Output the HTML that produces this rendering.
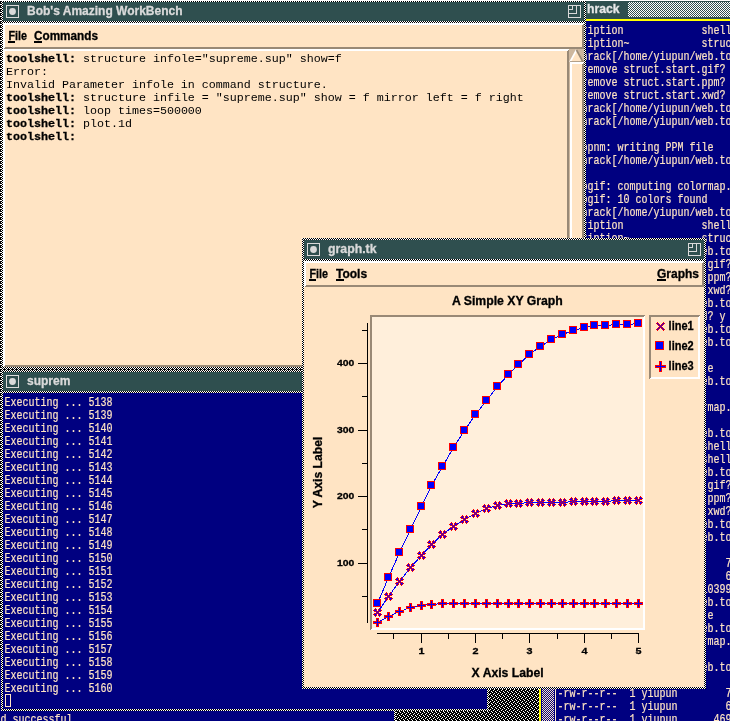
<!DOCTYPE html>
<html><head><meta charset="utf-8"><title>Bob's Amazing WorkBench</title>
<style>
html,body{margin:0;padding:0;background:#000;overflow:hidden}
svg{display:block;will-change:transform}
.tm{font-family:"Liberation Mono","DejaVu Sans Mono",monospace;font-size:13px;white-space:pre;stroke:#FFE4C4;stroke-width:.2px}
.hb{font-family:"Liberation Sans","DejaVu Sans",sans-serif;font-weight:bold;white-space:pre;stroke-width:.3px}
.cr{font-family:"Liberation Mono","DejaVu Sans Mono",monospace;font-size:11.667px;white-space:pre}
.cb{font-weight:bold;stroke:#000;stroke-width:.3px}
</style></head><body>
<svg width="730" height="721" viewBox="0 0 730 721" shape-rendering="crispEdges">
<defs>
<pattern id="weave" width="4" height="4" patternUnits="userSpaceOnUse"><rect width="4" height="4" fill="#000"/><rect x="0" y="0" width="1" height="1" fill="#fff"/><rect x="2" y="1" width="1" height="1" fill="#fff"/><rect x="1" y="2" width="1" height="1" fill="#fff"/><rect x="3" y="3" width="1" height="1" fill="#fff"/></pattern>
<pattern id="dith" width="2" height="2" patternUnits="userSpaceOnUse"><rect width="2" height="2" fill="#000"/><rect x="0" y="0" width="1" height="1" fill="#fff"/><rect x="1" y="1" width="1" height="1" fill="#fff"/></pattern>
<pattern id="dith2" width="2" height="2" patternUnits="userSpaceOnUse"><rect width="2" height="2" fill="#fff"/><rect x="0" y="0" width="1" height="1" fill="#000"/><rect x="1" y="1" width="1" height="1" fill="#000"/></pattern>
<pattern id="tstip" width="2" height="2" patternUnits="userSpaceOnUse"><rect width="2" height="2" fill="#2F4F4F"/><rect x="1" y="0" width="1" height="1" fill="#fff"/><rect x="0" y="1" width="1" height="1" fill="#fff"/></pattern>
<pattern id="sbstip" width="2" height="2" patternUnits="userSpaceOnUse"><rect width="2" height="2" fill="#000080"/><rect x="0" y="0" width="1" height="1" fill="#FFE4C4"/><rect x="1" y="1" width="1" height="1" fill="#FFE4C4"/></pattern>
<clipPath id="cpHr"><rect x="539" y="0" width="191" height="721"/></clipPath>
<clipPath id="cpBot"><rect x="0" y="711" width="394" height="10"/></clipPath>
</defs>
<rect x="0" y="0" width="730" height="721" fill="url(#weave)"/>
<rect x="0" y="711" width="394" height="10" fill="#000080"/>
<rect x="0" y="651" width="1" height="60" fill="#000080"/>
<rect x="394" y="711" width="2" height="10" fill="url(#dith2)"/>
<g clip-path="url(#cpBot)">
<text class="tm" x="0.5" y="723" textLength="78" lengthAdjust="spacingAndGlyphs" fill="#FFE4C4">d successful.</text>
</g>
<g clip-path="url(#cpHr)">
<rect x="539" y="0" width="191" height="721" fill="#000080"/>
<rect x="539" y="0" width="2" height="721" fill="#FFFF00"/>
<rect x="539" y="0" width="191" height="1" fill="#fff"/>
<rect x="541" y="1" width="189" height="18" fill="#2F4F4F"/>
<rect x="628" y="2" width="102" height="15" fill="url(#tstip)"/>
<text class="hb" x="587" y="13" font-size="12" fill="#E8E8E8" stroke="#E8E8E8" text-anchor="start" textLength="32.5" lengthAdjust="spacingAndGlyphs">hrack</text>
<rect x="539" y="19" width="191" height="2" fill="#FFFF00"/>
<rect x="542" y="21" width="12" height="700" fill="url(#sbstip)"/>
<rect x="555" y="21" width="1" height="700" fill="#FFE4C4"/>
<text class="tm" x="557.4" y="34" textLength="174" lengthAdjust="spacingAndGlyphs" fill="#FFE4C4">Description             shell</text>
<text class="tm" x="557.4" y="47" textLength="180" lengthAdjust="spacingAndGlyphs" fill="#FFE4C4">Description~            struct</text>
<text class="tm" x="557.4" y="60" textLength="192" lengthAdjust="spacingAndGlyphs" fill="#FFE4C4">yi@shrack[/home/yiupun/web.tool]</text>
<text class="tm" x="557.4" y="73" textLength="180" lengthAdjust="spacingAndGlyphs" fill="#FFE4C4">rm: remove struct.start.gif? y</text>
<text class="tm" x="557.4" y="86" textLength="180" lengthAdjust="spacingAndGlyphs" fill="#FFE4C4">rm: remove struct.start.ppm? y</text>
<text class="tm" x="557.4" y="99" textLength="180" lengthAdjust="spacingAndGlyphs" fill="#FFE4C4">rm: remove struct.start.xwd? y</text>
<text class="tm" x="557.4" y="112" textLength="192" lengthAdjust="spacingAndGlyphs" fill="#FFE4C4">yi@shrack[/home/yiupun/web.tool]</text>
<text class="tm" x="557.4" y="125" textLength="192" lengthAdjust="spacingAndGlyphs" fill="#FFE4C4">yi@shrack[/home/yiupun/web.tool]</text>
<text class="tm" x="557.4" y="151" textLength="156" lengthAdjust="spacingAndGlyphs" fill="#FFE4C4">giftopnm: writing PPM file</text>
<text class="tm" x="557.4" y="164" textLength="192" lengthAdjust="spacingAndGlyphs" fill="#FFE4C4">yi@shrack[/home/yiupun/web.tool]</text>
<text class="tm" x="557.4" y="190" textLength="174" lengthAdjust="spacingAndGlyphs" fill="#FFE4C4">ppmtogif: computing colormap.</text>
<text class="tm" x="557.4" y="203" textLength="150" lengthAdjust="spacingAndGlyphs" fill="#FFE4C4">ppmtogif: 10 colors found</text>
<text class="tm" x="557.4" y="216" textLength="192" lengthAdjust="spacingAndGlyphs" fill="#FFE4C4">yi@shrack[/home/yiupun/web.tool]</text>
<text class="tm" x="557.4" y="229" textLength="174" lengthAdjust="spacingAndGlyphs" fill="#FFE4C4">Description             shell</text>
<text class="tm" x="557.4" y="242" textLength="180" lengthAdjust="spacingAndGlyphs" fill="#FFE4C4">Description~            struct</text>
<text class="tm" x="557.4" y="255" textLength="192" lengthAdjust="spacingAndGlyphs" fill="#FFE4C4">yi@shrack[/home/yiupun/web.tool]</text>
<text class="tm" x="557.4" y="268" textLength="186" lengthAdjust="spacingAndGlyphs" fill="#FFE4C4">rm: remove struct1.start.gif? y</text>
<text class="tm" x="557.4" y="281" textLength="186" lengthAdjust="spacingAndGlyphs" fill="#FFE4C4">rm: remove struct1.start.ppm? y</text>
<text class="tm" x="557.4" y="294" textLength="186" lengthAdjust="spacingAndGlyphs" fill="#FFE4C4">rm: remove struct1.start.xwd? y</text>
<text class="tm" x="557.4" y="307" textLength="192" lengthAdjust="spacingAndGlyphs" fill="#FFE4C4">yi@shrack[/home/yiupun/web.tool]</text>
<text class="tm" x="557.4" y="320" textLength="168" lengthAdjust="spacingAndGlyphs" fill="#FFE4C4">rm: remove struct.end.xwd? y</text>
<text class="tm" x="557.4" y="333" textLength="192" lengthAdjust="spacingAndGlyphs" fill="#FFE4C4">yi@shrack[/home/yiupun/web.tool]</text>
<text class="tm" x="557.4" y="346" textLength="192" lengthAdjust="spacingAndGlyphs" fill="#FFE4C4">yi@shrack[/home/yiupun/web.tool]</text>
<text class="tm" x="557.4" y="372" textLength="156" lengthAdjust="spacingAndGlyphs" fill="#FFE4C4">Description~             e</text>
<text class="tm" x="557.4" y="385" textLength="192" lengthAdjust="spacingAndGlyphs" fill="#FFE4C4">yi@shrack[/home/yiupun/web.tool]</text>
<text class="tm" x="557.4" y="411" textLength="174" lengthAdjust="spacingAndGlyphs" fill="#FFE4C4">ppmtogif: computing colormap.</text>
<text class="tm" x="557.4" y="437" textLength="192" lengthAdjust="spacingAndGlyphs" fill="#FFE4C4">yi@shrack[/home/yiupun/web.tool]</text>
<text class="tm" x="557.4" y="450" textLength="174" lengthAdjust="spacingAndGlyphs" fill="#FFE4C4">Description             shell</text>
<text class="tm" x="557.4" y="463" textLength="174" lengthAdjust="spacingAndGlyphs" fill="#FFE4C4">Description             shell</text>
<text class="tm" x="557.4" y="476" textLength="192" lengthAdjust="spacingAndGlyphs" fill="#FFE4C4">yi@shrack[/home/yiupun/web.tool]</text>
<text class="tm" x="557.4" y="489" textLength="186" lengthAdjust="spacingAndGlyphs" fill="#FFE4C4">rm: remove struct1.start.gif? y</text>
<text class="tm" x="557.4" y="502" textLength="186" lengthAdjust="spacingAndGlyphs" fill="#FFE4C4">rm: remove struct1.start.ppm? y</text>
<text class="tm" x="557.4" y="515" textLength="186" lengthAdjust="spacingAndGlyphs" fill="#FFE4C4">rm: remove struct1.start.xwd? y</text>
<text class="tm" x="557.4" y="528" textLength="192" lengthAdjust="spacingAndGlyphs" fill="#FFE4C4">yi@shrack[/home/yiupun/web.tool]</text>
<text class="tm" x="557.4" y="541" textLength="192" lengthAdjust="spacingAndGlyphs" fill="#FFE4C4">yi@shrack[/home/yiupun/web.tool]</text>
<text class="tm" x="557.4" y="567" textLength="174" lengthAdjust="spacingAndGlyphs" fill="#FFE4C4">-rw-r--r--  1 yiupun        7</text>
<text class="tm" x="557.4" y="580" textLength="174" lengthAdjust="spacingAndGlyphs" fill="#FFE4C4">-rw-r--r--  1 yiupun        6</text>
<text class="tm" x="557.4" y="593" textLength="174" lengthAdjust="spacingAndGlyphs" fill="#FFE4C4">-rw-r--r--  1 yiupun    10399</text>
<text class="tm" x="557.4" y="606" textLength="192" lengthAdjust="spacingAndGlyphs" fill="#FFE4C4">yi@shrack[/home/yiupun/web.tool]</text>
<text class="tm" x="557.4" y="619" textLength="156" lengthAdjust="spacingAndGlyphs" fill="#FFE4C4">Description~             e</text>
<text class="tm" x="557.4" y="632" textLength="192" lengthAdjust="spacingAndGlyphs" fill="#FFE4C4">yi@shrack[/home/yiupun/web.tool]</text>
<text class="tm" x="557.4" y="645" textLength="174" lengthAdjust="spacingAndGlyphs" fill="#FFE4C4">ppmtogif: computing colormap.</text>
<text class="tm" x="701.4" y="658" textLength="6" lengthAdjust="spacingAndGlyphs" fill="#FFE4C4">]</text>
<text class="tm" x="557.4" y="671" textLength="192" lengthAdjust="spacingAndGlyphs" fill="#FFE4C4">yi@shrack[/home/yiupun/web.tool]</text>
<text class="tm" x="557.4" y="697" textLength="174" lengthAdjust="spacingAndGlyphs" fill="#FFE4C4">-rw-r--r--  1 yiupun        7</text>
<text class="tm" x="557.4" y="710" textLength="174" lengthAdjust="spacingAndGlyphs" fill="#FFE4C4">-rw-r--r--  1 yiupun        6</text>
<text class="tm" x="557.4" y="723" textLength="174" lengthAdjust="spacingAndGlyphs" fill="#FFE4C4">-rw-r--r--  1 yiupun      469</text>
</g>
<rect x="1" y="370" width="488" height="341" fill="url(#dith2)"/>
<rect x="3" y="372" width="484" height="19" fill="#2F4F4F"/>
<rect x="6.5" y="375.5" width="12" height="12" fill="none" stroke="#D9D9D9"/>
<circle cx="12.5" cy="381.5" r="3.4" fill="#D9D9D9" shape-rendering="auto"/>
<text class="hb" x="27" y="385" font-size="12" fill="#D9D9D9" stroke="#D9D9D9" text-anchor="start">suprem</text>
<rect x="3" y="393" width="484" height="316" fill="#000080"/>
<text class="tm" x="4.4" y="406" textLength="108" lengthAdjust="spacingAndGlyphs" fill="#FFE4C4">Executing ... 5138</text>
<text class="tm" x="4.4" y="419" textLength="108" lengthAdjust="spacingAndGlyphs" fill="#FFE4C4">Executing ... 5139</text>
<text class="tm" x="4.4" y="432" textLength="108" lengthAdjust="spacingAndGlyphs" fill="#FFE4C4">Executing ... 5140</text>
<text class="tm" x="4.4" y="445" textLength="108" lengthAdjust="spacingAndGlyphs" fill="#FFE4C4">Executing ... 5141</text>
<text class="tm" x="4.4" y="458" textLength="108" lengthAdjust="spacingAndGlyphs" fill="#FFE4C4">Executing ... 5142</text>
<text class="tm" x="4.4" y="471" textLength="108" lengthAdjust="spacingAndGlyphs" fill="#FFE4C4">Executing ... 5143</text>
<text class="tm" x="4.4" y="484" textLength="108" lengthAdjust="spacingAndGlyphs" fill="#FFE4C4">Executing ... 5144</text>
<text class="tm" x="4.4" y="497" textLength="108" lengthAdjust="spacingAndGlyphs" fill="#FFE4C4">Executing ... 5145</text>
<text class="tm" x="4.4" y="510" textLength="108" lengthAdjust="spacingAndGlyphs" fill="#FFE4C4">Executing ... 5146</text>
<text class="tm" x="4.4" y="523" textLength="108" lengthAdjust="spacingAndGlyphs" fill="#FFE4C4">Executing ... 5147</text>
<text class="tm" x="4.4" y="536" textLength="108" lengthAdjust="spacingAndGlyphs" fill="#FFE4C4">Executing ... 5148</text>
<text class="tm" x="4.4" y="549" textLength="108" lengthAdjust="spacingAndGlyphs" fill="#FFE4C4">Executing ... 5149</text>
<text class="tm" x="4.4" y="562" textLength="108" lengthAdjust="spacingAndGlyphs" fill="#FFE4C4">Executing ... 5150</text>
<text class="tm" x="4.4" y="575" textLength="108" lengthAdjust="spacingAndGlyphs" fill="#FFE4C4">Executing ... 5151</text>
<text class="tm" x="4.4" y="588" textLength="108" lengthAdjust="spacingAndGlyphs" fill="#FFE4C4">Executing ... 5152</text>
<text class="tm" x="4.4" y="601" textLength="108" lengthAdjust="spacingAndGlyphs" fill="#FFE4C4">Executing ... 5153</text>
<text class="tm" x="4.4" y="614" textLength="108" lengthAdjust="spacingAndGlyphs" fill="#FFE4C4">Executing ... 5154</text>
<text class="tm" x="4.4" y="627" textLength="108" lengthAdjust="spacingAndGlyphs" fill="#FFE4C4">Executing ... 5155</text>
<text class="tm" x="4.4" y="640" textLength="108" lengthAdjust="spacingAndGlyphs" fill="#FFE4C4">Executing ... 5156</text>
<text class="tm" x="4.4" y="653" textLength="108" lengthAdjust="spacingAndGlyphs" fill="#FFE4C4">Executing ... 5157</text>
<text class="tm" x="4.4" y="666" textLength="108" lengthAdjust="spacingAndGlyphs" fill="#FFE4C4">Executing ... 5158</text>
<text class="tm" x="4.4" y="679" textLength="108" lengthAdjust="spacingAndGlyphs" fill="#FFE4C4">Executing ... 5159</text>
<text class="tm" x="4.4" y="692" textLength="108" lengthAdjust="spacingAndGlyphs" fill="#FFE4C4">Executing ... 5160</text>
<rect x="5.5" y="694.5" width="5" height="12" fill="none" stroke="#FFE4C4"/>
<rect x="1" y="0" width="585" height="369" fill="url(#dith2)"/>
<rect x="3" y="2" width="581" height="19" fill="#2F4F4F"/>
<rect x="6.5" y="5.5" width="12" height="12" fill="none" stroke="#D9D9D9"/>
<circle cx="12.5" cy="11.5" r="3.4" fill="#D9D9D9" shape-rendering="auto"/>
<text class="hb" x="27" y="15" font-size="12" fill="#D9D9D9" stroke="#D9D9D9" text-anchor="start">Bob's Amazing WorkBench</text>
<rect x="568.5" y="5.5" width="12" height="12" fill="none" stroke="#D9D9D9"/>
<path d="M568.5 9.5H572.5V5.5M568.5 13.5H576.5V5.5" fill="none" stroke="#D9D9D9"/>
<rect x="3" y="23" width="581" height="26" fill="#FFE4C4"/>
<path d="M3 23H584L582 25H5V47L3 49Z" fill="#FFFFFF"/>
<path d="M584 49H3L5 47H582V25L584 23Z" fill="#998976"/>
<text class="hb" x="8.5" y="40" font-size="12" fill="#000" stroke="#000" text-anchor="start" textLength="18.5" lengthAdjust="spacingAndGlyphs">File</text>
<rect x="8" y="41" width="7" height="2" fill="#000"/>
<text class="hb" x="34" y="40" font-size="12" fill="#000" stroke="#000" text-anchor="start" textLength="64" lengthAdjust="spacingAndGlyphs">Commands</text>
<rect x="34" y="41" width="8" height="2" fill="#000"/>
<rect x="3" y="49" width="566" height="318" fill="#FFE4C4"/>
<path d="M3 49H569L567 51H5V365L3 367Z" fill="#FFFFFF"/>
<path d="M569 367H3L5 365H567V51L569 49Z" fill="#998976"/>
<rect x="569" y="49" width="15" height="318" fill="#CDB79E"/>
<path d="M576.5 50L570 62H583Z" fill="#FFE4C4" shape-rendering="auto"/>
<path d="M576.5 50L570 62" stroke="#FFFFFF" stroke-width="1.6" fill="none" shape-rendering="auto"/>
<path d="M576.5 50L583 62H570" stroke="#998976" stroke-width="1.6" fill="none" shape-rendering="auto"/>
<rect x="570" y="62" width="14" height="304" fill="#FFE4C4"/>
<path d="M570 62H584L582 64H572V364L570 366Z" fill="#FFFFFF"/>
<path d="M584 366H570L572 364H582V64L584 62Z" fill="#998976"/>
<text class="cr" x="6" y="62" fill="#000"><tspan class="cb">toolshell:</tspan> structure infole="supreme.sup" show=f</text>
<text class="cr" x="6" y="75" fill="#000"><tspan class="cb"></tspan>Error:</text>
<text class="cr" x="6" y="88" fill="#000"><tspan class="cb"></tspan>Invalid Parameter infole in command structure.</text>
<text class="cr" x="6" y="101" fill="#000"><tspan class="cb">toolshell:</tspan> structure infile = "supreme.sup" show = f mirror left = f right</text>
<text class="cr" x="6" y="114" fill="#000"><tspan class="cb">toolshell:</tspan> loop times=500000</text>
<text class="cr" x="6" y="127" fill="#000"><tspan class="cb">toolshell:</tspan> plot.1d</text>
<text class="cr" x="6" y="140" fill="#000"><tspan class="cb">toolshell:</tspan></text>
<rect x="302" y="238" width="404" height="451" fill="url(#dith)"/>
<rect x="304" y="240" width="400" height="19" fill="#2F4F4F"/>
<rect x="307.5" y="243.5" width="12" height="12" fill="none" stroke="#D9D9D9" stroke-width="1"/>
<circle cx="313.5" cy="249.5" r="3.4" fill="#D9D9D9" shape-rendering="auto"/>
<text class="hb" x="328" y="253" font-size="12" fill="#D9D9D9" stroke="#D9D9D9" text-anchor="start" textLength="48.5" lengthAdjust="spacingAndGlyphs">graph.tk</text>
<rect x="688.5" y="243.5" width="12" height="12" fill="none" stroke="#D9D9D9" stroke-width="1"/>
<path d="M688.5 247.5H692.5V243.5M688.5 251.5H696.5V243.5" fill="none" stroke="#D9D9D9" stroke-width="1"/>
<rect x="304" y="261" width="400" height="426" fill="#FFE4C4"/>
<rect x="304" y="261" width="400" height="26" fill="#FFE4C4"/>
<path d="M304 261H704L702 263H306V285L304 287Z" fill="#FFFFFF"/>
<path d="M704 287H304L306 285H702V263L704 261Z" fill="#998976"/>
<text class="hb" x="309.5" y="278" font-size="12" fill="#000" stroke="#000" text-anchor="start" textLength="18.5" lengthAdjust="spacingAndGlyphs">File</text>
<rect x="309" y="279" width="7" height="2" fill="#000"/>
<text class="hb" x="336" y="278" font-size="12" fill="#000" stroke="#000" text-anchor="start">Tools</text>
<rect x="336" y="279" width="8" height="2" fill="#000"/>
<text class="hb" x="657" y="278" font-size="12" fill="#000" stroke="#000" text-anchor="start">Graphs</text>
<rect x="657" y="279" width="9" height="2" fill="#000"/>
<text class="hb" x="452" y="305" font-size="12" fill="#000" stroke="#000" text-anchor="start" textLength="110.8" lengthAdjust="spacingAndGlyphs">A Simple XY Graph</text>
<text class="hb" x="471.6" y="677" font-size="12" fill="#000" stroke="#000" text-anchor="start" textLength="72" lengthAdjust="spacingAndGlyphs">X Axis Label</text>
<text class="hb" font-size="12" fill="#000" stroke="#000" text-anchor="middle" textLength="71.5" lengthAdjust="spacingAndGlyphs" transform="translate(322,472.5) rotate(-90)">Y Axis Label</text>
<rect x="370" y="315" width="275" height="315" fill="#FFEFDB"/>
<path d="M370 315H645L643 317H372V628L370 630Z" fill="#998976"/>
<path d="M645 630H370L372 628H643V317L645 315Z" fill="#FFFFFF"/>
<rect x="367" y="323" width="1" height="300" fill="#000"/>
<rect x="358" y="363" width="9" height="1" fill="#000"/>
<text class="hb" x="337" y="366" font-size="9.6" fill="#000" stroke="#000" text-anchor="start" textLength="17.3" lengthAdjust="spacingAndGlyphs">400</text>
<rect x="358" y="430" width="9" height="1" fill="#000"/>
<text class="hb" x="337" y="433" font-size="9.6" fill="#000" stroke="#000" text-anchor="start" textLength="17.3" lengthAdjust="spacingAndGlyphs">300</text>
<rect x="358" y="496" width="9" height="1" fill="#000"/>
<text class="hb" x="337" y="499" font-size="9.6" fill="#000" stroke="#000" text-anchor="start" textLength="17.3" lengthAdjust="spacingAndGlyphs">200</text>
<rect x="358" y="563" width="9" height="1" fill="#000"/>
<text class="hb" x="337" y="566" font-size="9.6" fill="#000" stroke="#000" text-anchor="start" textLength="17.3" lengthAdjust="spacingAndGlyphs">100</text>
<rect x="362" y="330" width="5" height="1" fill="#000"/>
<rect x="362" y="396" width="5" height="1" fill="#000"/>
<rect x="362" y="463" width="5" height="1" fill="#000"/>
<rect x="362" y="529" width="5" height="1" fill="#000"/>
<rect x="362" y="596" width="5" height="1" fill="#000"/>
<rect x="377" y="633" width="262" height="1" fill="#000"/>
<rect x="421" y="633" width="1" height="10" fill="#000"/>
<text class="hb" x="418.5" y="654" font-size="9.6" fill="#000" stroke="#000" text-anchor="start" textLength="6" lengthAdjust="spacingAndGlyphs">1</text>
<rect x="475" y="633" width="1" height="10" fill="#000"/>
<text class="hb" x="472.5" y="654" font-size="9.6" fill="#000" stroke="#000" text-anchor="start" textLength="6" lengthAdjust="spacingAndGlyphs">2</text>
<rect x="529" y="633" width="1" height="10" fill="#000"/>
<text class="hb" x="526.5" y="654" font-size="9.6" fill="#000" stroke="#000" text-anchor="start" textLength="6" lengthAdjust="spacingAndGlyphs">3</text>
<rect x="584" y="633" width="1" height="10" fill="#000"/>
<text class="hb" x="581.5" y="654" font-size="9.6" fill="#000" stroke="#000" text-anchor="start" textLength="6" lengthAdjust="spacingAndGlyphs">4</text>
<rect x="638" y="633" width="1" height="10" fill="#000"/>
<text class="hb" x="635.5" y="654" font-size="9.6" fill="#000" stroke="#000" text-anchor="start" textLength="6" lengthAdjust="spacingAndGlyphs">5</text>
<rect x="393" y="633" width="1" height="6" fill="#000"/>
<rect x="448" y="633" width="1" height="6" fill="#000"/>
<rect x="502" y="633" width="1" height="6" fill="#000"/>
<rect x="557" y="633" width="1" height="6" fill="#000"/>
<rect x="611" y="633" width="1" height="6" fill="#000"/>
<polyline points="377.5,603.5 388.5,577.5 399.5,552.5 410.5,529.5 421.5,506.5 431.5,485.5 442.5,466.5 453.5,447.5 464.5,430.5 475.5,414.5 486.5,400.5 497.5,386.5 508.5,374.5 518.5,364.5 529.5,354.5 540.5,346.5 551.5,339.5 562.5,334.5 573.5,330.5 584.5,327.5 594.5,325.5 605.5,325.5 616.5,324.5 627.5,324.5 638.5,323.5" fill="none" stroke="#0000FF" stroke-width="1"/>
<polyline points="377.5,612.5 388.5,596.5 399.5,581.5 410.5,567.5 421.5,555.5 431.5,544.5 442.5,534.5 453.5,526.5 464.5,519.5 475.5,513.5 486.5,508.5 497.5,505.5 508.5,503.5 518.5,503.5 529.5,502.5 540.5,502.5 551.5,502.5 562.5,502.5 573.5,501.5 584.5,501.5 594.5,501.5 605.5,501.5 616.5,500.5 627.5,500.5 638.5,500.5" fill="none" stroke="#0000FF" stroke-width="1"/>
<polyline points="377.5,622.5 388.5,616.5 399.5,611.5 410.5,607.5 421.5,605.5 431.5,604.5 442.5,603.5 453.5,603.5 464.5,603.5 475.5,603.5 486.5,603.5 497.5,603.5 508.5,603.5 518.5,603.5 529.5,603.5 540.5,603.5 551.5,603.5 562.5,603.5 573.5,603.5 584.5,603.5 594.5,603.5 605.5,603.5 616.5,603.5 627.5,603.5 638.5,603.5" fill="none" stroke="#0000FF" stroke-width="1"/>
<rect x="373" y="599" width="8" height="8" fill="#FF0000"/>
<rect x="374" y="600" width="6" height="6" fill="#0000FF"/>
<rect x="384" y="573" width="8" height="8" fill="#FF0000"/>
<rect x="385" y="574" width="6" height="6" fill="#0000FF"/>
<rect x="395" y="548" width="8" height="8" fill="#FF0000"/>
<rect x="396" y="549" width="6" height="6" fill="#0000FF"/>
<rect x="406" y="525" width="8" height="8" fill="#FF0000"/>
<rect x="407" y="526" width="6" height="6" fill="#0000FF"/>
<rect x="417" y="502" width="8" height="8" fill="#FF0000"/>
<rect x="418" y="503" width="6" height="6" fill="#0000FF"/>
<rect x="427" y="481" width="8" height="8" fill="#FF0000"/>
<rect x="428" y="482" width="6" height="6" fill="#0000FF"/>
<rect x="438" y="462" width="8" height="8" fill="#FF0000"/>
<rect x="439" y="463" width="6" height="6" fill="#0000FF"/>
<rect x="449" y="443" width="8" height="8" fill="#FF0000"/>
<rect x="450" y="444" width="6" height="6" fill="#0000FF"/>
<rect x="460" y="426" width="8" height="8" fill="#FF0000"/>
<rect x="461" y="427" width="6" height="6" fill="#0000FF"/>
<rect x="471" y="410" width="8" height="8" fill="#FF0000"/>
<rect x="472" y="411" width="6" height="6" fill="#0000FF"/>
<rect x="482" y="396" width="8" height="8" fill="#FF0000"/>
<rect x="483" y="397" width="6" height="6" fill="#0000FF"/>
<rect x="493" y="382" width="8" height="8" fill="#FF0000"/>
<rect x="494" y="383" width="6" height="6" fill="#0000FF"/>
<rect x="504" y="370" width="8" height="8" fill="#FF0000"/>
<rect x="505" y="371" width="6" height="6" fill="#0000FF"/>
<rect x="514" y="360" width="8" height="8" fill="#FF0000"/>
<rect x="515" y="361" width="6" height="6" fill="#0000FF"/>
<rect x="525" y="350" width="8" height="8" fill="#FF0000"/>
<rect x="526" y="351" width="6" height="6" fill="#0000FF"/>
<rect x="536" y="342" width="8" height="8" fill="#FF0000"/>
<rect x="537" y="343" width="6" height="6" fill="#0000FF"/>
<rect x="547" y="335" width="8" height="8" fill="#FF0000"/>
<rect x="548" y="336" width="6" height="6" fill="#0000FF"/>
<rect x="558" y="330" width="8" height="8" fill="#FF0000"/>
<rect x="559" y="331" width="6" height="6" fill="#0000FF"/>
<rect x="569" y="326" width="8" height="8" fill="#FF0000"/>
<rect x="570" y="327" width="6" height="6" fill="#0000FF"/>
<rect x="580" y="323" width="8" height="8" fill="#FF0000"/>
<rect x="581" y="324" width="6" height="6" fill="#0000FF"/>
<rect x="590" y="321" width="8" height="8" fill="#FF0000"/>
<rect x="591" y="322" width="6" height="6" fill="#0000FF"/>
<rect x="601" y="321" width="8" height="8" fill="#FF0000"/>
<rect x="602" y="322" width="6" height="6" fill="#0000FF"/>
<rect x="612" y="320" width="8" height="8" fill="#FF0000"/>
<rect x="613" y="321" width="6" height="6" fill="#0000FF"/>
<rect x="623" y="320" width="8" height="8" fill="#FF0000"/>
<rect x="624" y="321" width="6" height="6" fill="#0000FF"/>
<rect x="634" y="319" width="8" height="8" fill="#FF0000"/>
<rect x="635" y="320" width="6" height="6" fill="#0000FF"/>
<path d="M375 608h1v1h-1zM379 608h1v1h-1zM374 609h3v1h-3zM378 609h3v1h-3zM373 610h4v1h-4zM378 610h4v1h-4zM374 611h7v1h-7zM376 612h3v1h-3zM374 613h7v1h-7zM373 614h4v1h-4zM378 614h4v1h-4zM374 615h3v1h-3zM378 615h3v1h-3zM375 616h1v1h-1zM379 616h1v1h-1zM386 592h1v1h-1zM390 592h1v1h-1zM385 593h3v1h-3zM389 593h3v1h-3zM384 594h4v1h-4zM389 594h4v1h-4zM385 595h7v1h-7zM387 596h3v1h-3zM385 597h7v1h-7zM384 598h4v1h-4zM389 598h4v1h-4zM385 599h3v1h-3zM389 599h3v1h-3zM386 600h1v1h-1zM390 600h1v1h-1zM397 577h1v1h-1zM401 577h1v1h-1zM396 578h3v1h-3zM400 578h3v1h-3zM395 579h4v1h-4zM400 579h4v1h-4zM396 580h7v1h-7zM398 581h3v1h-3zM396 582h7v1h-7zM395 583h4v1h-4zM400 583h4v1h-4zM396 584h3v1h-3zM400 584h3v1h-3zM397 585h1v1h-1zM401 585h1v1h-1zM408 563h1v1h-1zM412 563h1v1h-1zM407 564h3v1h-3zM411 564h3v1h-3zM406 565h4v1h-4zM411 565h4v1h-4zM407 566h7v1h-7zM409 567h3v1h-3zM407 568h7v1h-7zM406 569h4v1h-4zM411 569h4v1h-4zM407 570h3v1h-3zM411 570h3v1h-3zM408 571h1v1h-1zM412 571h1v1h-1zM419 551h1v1h-1zM423 551h1v1h-1zM418 552h3v1h-3zM422 552h3v1h-3zM417 553h4v1h-4zM422 553h4v1h-4zM418 554h7v1h-7zM420 555h3v1h-3zM418 556h7v1h-7zM417 557h4v1h-4zM422 557h4v1h-4zM418 558h3v1h-3zM422 558h3v1h-3zM419 559h1v1h-1zM423 559h1v1h-1zM429 540h1v1h-1zM433 540h1v1h-1zM428 541h3v1h-3zM432 541h3v1h-3zM427 542h4v1h-4zM432 542h4v1h-4zM428 543h7v1h-7zM430 544h3v1h-3zM428 545h7v1h-7zM427 546h4v1h-4zM432 546h4v1h-4zM428 547h3v1h-3zM432 547h3v1h-3zM429 548h1v1h-1zM433 548h1v1h-1zM440 530h1v1h-1zM444 530h1v1h-1zM439 531h3v1h-3zM443 531h3v1h-3zM438 532h4v1h-4zM443 532h4v1h-4zM439 533h7v1h-7zM441 534h3v1h-3zM439 535h7v1h-7zM438 536h4v1h-4zM443 536h4v1h-4zM439 537h3v1h-3zM443 537h3v1h-3zM440 538h1v1h-1zM444 538h1v1h-1zM451 522h1v1h-1zM455 522h1v1h-1zM450 523h3v1h-3zM454 523h3v1h-3zM449 524h4v1h-4zM454 524h4v1h-4zM450 525h7v1h-7zM452 526h3v1h-3zM450 527h7v1h-7zM449 528h4v1h-4zM454 528h4v1h-4zM450 529h3v1h-3zM454 529h3v1h-3zM451 530h1v1h-1zM455 530h1v1h-1zM462 515h1v1h-1zM466 515h1v1h-1zM461 516h3v1h-3zM465 516h3v1h-3zM460 517h4v1h-4zM465 517h4v1h-4zM461 518h7v1h-7zM463 519h3v1h-3zM461 520h7v1h-7zM460 521h4v1h-4zM465 521h4v1h-4zM461 522h3v1h-3zM465 522h3v1h-3zM462 523h1v1h-1zM466 523h1v1h-1zM473 509h1v1h-1zM477 509h1v1h-1zM472 510h3v1h-3zM476 510h3v1h-3zM471 511h4v1h-4zM476 511h4v1h-4zM472 512h7v1h-7zM474 513h3v1h-3zM472 514h7v1h-7zM471 515h4v1h-4zM476 515h4v1h-4zM472 516h3v1h-3zM476 516h3v1h-3zM473 517h1v1h-1zM477 517h1v1h-1zM484 504h1v1h-1zM488 504h1v1h-1zM483 505h3v1h-3zM487 505h3v1h-3zM482 506h4v1h-4zM487 506h4v1h-4zM483 507h7v1h-7zM485 508h3v1h-3zM483 509h7v1h-7zM482 510h4v1h-4zM487 510h4v1h-4zM483 511h3v1h-3zM487 511h3v1h-3zM484 512h1v1h-1zM488 512h1v1h-1zM495 501h1v1h-1zM499 501h1v1h-1zM494 502h3v1h-3zM498 502h3v1h-3zM493 503h4v1h-4zM498 503h4v1h-4zM494 504h7v1h-7zM496 505h3v1h-3zM494 506h7v1h-7zM493 507h4v1h-4zM498 507h4v1h-4zM494 508h3v1h-3zM498 508h3v1h-3zM495 509h1v1h-1zM499 509h1v1h-1zM506 499h1v1h-1zM510 499h1v1h-1zM505 500h3v1h-3zM509 500h3v1h-3zM504 501h4v1h-4zM509 501h4v1h-4zM505 502h7v1h-7zM507 503h3v1h-3zM505 504h7v1h-7zM504 505h4v1h-4zM509 505h4v1h-4zM505 506h3v1h-3zM509 506h3v1h-3zM506 507h1v1h-1zM510 507h1v1h-1zM516 499h1v1h-1zM520 499h1v1h-1zM515 500h3v1h-3zM519 500h3v1h-3zM514 501h4v1h-4zM519 501h4v1h-4zM515 502h7v1h-7zM517 503h3v1h-3zM515 504h7v1h-7zM514 505h4v1h-4zM519 505h4v1h-4zM515 506h3v1h-3zM519 506h3v1h-3zM516 507h1v1h-1zM520 507h1v1h-1zM527 498h1v1h-1zM531 498h1v1h-1zM526 499h3v1h-3zM530 499h3v1h-3zM525 500h4v1h-4zM530 500h4v1h-4zM526 501h7v1h-7zM528 502h3v1h-3zM526 503h7v1h-7zM525 504h4v1h-4zM530 504h4v1h-4zM526 505h3v1h-3zM530 505h3v1h-3zM527 506h1v1h-1zM531 506h1v1h-1zM538 498h1v1h-1zM542 498h1v1h-1zM537 499h3v1h-3zM541 499h3v1h-3zM536 500h4v1h-4zM541 500h4v1h-4zM537 501h7v1h-7zM539 502h3v1h-3zM537 503h7v1h-7zM536 504h4v1h-4zM541 504h4v1h-4zM537 505h3v1h-3zM541 505h3v1h-3zM538 506h1v1h-1zM542 506h1v1h-1zM549 498h1v1h-1zM553 498h1v1h-1zM548 499h3v1h-3zM552 499h3v1h-3zM547 500h4v1h-4zM552 500h4v1h-4zM548 501h7v1h-7zM550 502h3v1h-3zM548 503h7v1h-7zM547 504h4v1h-4zM552 504h4v1h-4zM548 505h3v1h-3zM552 505h3v1h-3zM549 506h1v1h-1zM553 506h1v1h-1zM560 498h1v1h-1zM564 498h1v1h-1zM559 499h3v1h-3zM563 499h3v1h-3zM558 500h4v1h-4zM563 500h4v1h-4zM559 501h7v1h-7zM561 502h3v1h-3zM559 503h7v1h-7zM558 504h4v1h-4zM563 504h4v1h-4zM559 505h3v1h-3zM563 505h3v1h-3zM560 506h1v1h-1zM564 506h1v1h-1zM571 497h1v1h-1zM575 497h1v1h-1zM570 498h3v1h-3zM574 498h3v1h-3zM569 499h4v1h-4zM574 499h4v1h-4zM570 500h7v1h-7zM572 501h3v1h-3zM570 502h7v1h-7zM569 503h4v1h-4zM574 503h4v1h-4zM570 504h3v1h-3zM574 504h3v1h-3zM571 505h1v1h-1zM575 505h1v1h-1zM582 497h1v1h-1zM586 497h1v1h-1zM581 498h3v1h-3zM585 498h3v1h-3zM580 499h4v1h-4zM585 499h4v1h-4zM581 500h7v1h-7zM583 501h3v1h-3zM581 502h7v1h-7zM580 503h4v1h-4zM585 503h4v1h-4zM581 504h3v1h-3zM585 504h3v1h-3zM582 505h1v1h-1zM586 505h1v1h-1zM592 497h1v1h-1zM596 497h1v1h-1zM591 498h3v1h-3zM595 498h3v1h-3zM590 499h4v1h-4zM595 499h4v1h-4zM591 500h7v1h-7zM593 501h3v1h-3zM591 502h7v1h-7zM590 503h4v1h-4zM595 503h4v1h-4zM591 504h3v1h-3zM595 504h3v1h-3zM592 505h1v1h-1zM596 505h1v1h-1zM603 497h1v1h-1zM607 497h1v1h-1zM602 498h3v1h-3zM606 498h3v1h-3zM601 499h4v1h-4zM606 499h4v1h-4zM602 500h7v1h-7zM604 501h3v1h-3zM602 502h7v1h-7zM601 503h4v1h-4zM606 503h4v1h-4zM602 504h3v1h-3zM606 504h3v1h-3zM603 505h1v1h-1zM607 505h1v1h-1zM614 496h1v1h-1zM618 496h1v1h-1zM613 497h3v1h-3zM617 497h3v1h-3zM612 498h4v1h-4zM617 498h4v1h-4zM613 499h7v1h-7zM615 500h3v1h-3zM613 501h7v1h-7zM612 502h4v1h-4zM617 502h4v1h-4zM613 503h3v1h-3zM617 503h3v1h-3zM614 504h1v1h-1zM618 504h1v1h-1zM625 496h1v1h-1zM629 496h1v1h-1zM624 497h3v1h-3zM628 497h3v1h-3zM623 498h4v1h-4zM628 498h4v1h-4zM624 499h7v1h-7zM626 500h3v1h-3zM624 501h7v1h-7zM623 502h4v1h-4zM628 502h4v1h-4zM624 503h3v1h-3zM628 503h3v1h-3zM625 504h1v1h-1zM629 504h1v1h-1zM636 496h1v1h-1zM640 496h1v1h-1zM635 497h3v1h-3zM639 497h3v1h-3zM634 498h4v1h-4zM639 498h4v1h-4zM635 499h7v1h-7zM637 500h3v1h-3zM635 501h7v1h-7zM634 502h4v1h-4zM639 502h4v1h-4zM635 503h3v1h-3zM639 503h3v1h-3zM636 504h1v1h-1zM640 504h1v1h-1z" fill="#FF0000"/>
<path d="M375 609h1v1h-1zM379 609h1v1h-1zM374 610h2v1h-2zM379 610h2v1h-2zM376 611h1v1h-1zM378 611h1v1h-1zM377 612h1v1h-1zM376 613h1v1h-1zM378 613h1v1h-1zM374 614h2v1h-2zM379 614h2v1h-2zM375 615h1v1h-1zM379 615h1v1h-1zM386 593h1v1h-1zM390 593h1v1h-1zM385 594h2v1h-2zM390 594h2v1h-2zM387 595h1v1h-1zM389 595h1v1h-1zM388 596h1v1h-1zM387 597h1v1h-1zM389 597h1v1h-1zM385 598h2v1h-2zM390 598h2v1h-2zM386 599h1v1h-1zM390 599h1v1h-1zM397 578h1v1h-1zM401 578h1v1h-1zM396 579h2v1h-2zM401 579h2v1h-2zM398 580h1v1h-1zM400 580h1v1h-1zM399 581h1v1h-1zM398 582h1v1h-1zM400 582h1v1h-1zM396 583h2v1h-2zM401 583h2v1h-2zM397 584h1v1h-1zM401 584h1v1h-1zM408 564h1v1h-1zM412 564h1v1h-1zM407 565h2v1h-2zM412 565h2v1h-2zM409 566h1v1h-1zM411 566h1v1h-1zM410 567h1v1h-1zM409 568h1v1h-1zM411 568h1v1h-1zM407 569h2v1h-2zM412 569h2v1h-2zM408 570h1v1h-1zM412 570h1v1h-1zM419 552h1v1h-1zM423 552h1v1h-1zM418 553h2v1h-2zM423 553h2v1h-2zM420 554h1v1h-1zM422 554h1v1h-1zM421 555h1v1h-1zM420 556h1v1h-1zM422 556h1v1h-1zM418 557h2v1h-2zM423 557h2v1h-2zM419 558h1v1h-1zM423 558h1v1h-1zM429 541h1v1h-1zM433 541h1v1h-1zM428 542h2v1h-2zM433 542h2v1h-2zM430 543h1v1h-1zM432 543h1v1h-1zM431 544h1v1h-1zM430 545h1v1h-1zM432 545h1v1h-1zM428 546h2v1h-2zM433 546h2v1h-2zM429 547h1v1h-1zM433 547h1v1h-1zM440 531h1v1h-1zM444 531h1v1h-1zM439 532h2v1h-2zM444 532h2v1h-2zM441 533h1v1h-1zM443 533h1v1h-1zM442 534h1v1h-1zM441 535h1v1h-1zM443 535h1v1h-1zM439 536h2v1h-2zM444 536h2v1h-2zM440 537h1v1h-1zM444 537h1v1h-1zM451 523h1v1h-1zM455 523h1v1h-1zM450 524h2v1h-2zM455 524h2v1h-2zM452 525h1v1h-1zM454 525h1v1h-1zM453 526h1v1h-1zM452 527h1v1h-1zM454 527h1v1h-1zM450 528h2v1h-2zM455 528h2v1h-2zM451 529h1v1h-1zM455 529h1v1h-1zM462 516h1v1h-1zM466 516h1v1h-1zM461 517h2v1h-2zM466 517h2v1h-2zM463 518h1v1h-1zM465 518h1v1h-1zM464 519h1v1h-1zM463 520h1v1h-1zM465 520h1v1h-1zM461 521h2v1h-2zM466 521h2v1h-2zM462 522h1v1h-1zM466 522h1v1h-1zM473 510h1v1h-1zM477 510h1v1h-1zM472 511h2v1h-2zM477 511h2v1h-2zM474 512h1v1h-1zM476 512h1v1h-1zM475 513h1v1h-1zM474 514h1v1h-1zM476 514h1v1h-1zM472 515h2v1h-2zM477 515h2v1h-2zM473 516h1v1h-1zM477 516h1v1h-1zM484 505h1v1h-1zM488 505h1v1h-1zM483 506h2v1h-2zM488 506h2v1h-2zM485 507h1v1h-1zM487 507h1v1h-1zM486 508h1v1h-1zM485 509h1v1h-1zM487 509h1v1h-1zM483 510h2v1h-2zM488 510h2v1h-2zM484 511h1v1h-1zM488 511h1v1h-1zM495 502h1v1h-1zM499 502h1v1h-1zM494 503h2v1h-2zM499 503h2v1h-2zM496 504h1v1h-1zM498 504h1v1h-1zM497 505h1v1h-1zM496 506h1v1h-1zM498 506h1v1h-1zM494 507h2v1h-2zM499 507h2v1h-2zM495 508h1v1h-1zM499 508h1v1h-1zM506 500h1v1h-1zM510 500h1v1h-1zM505 501h2v1h-2zM510 501h2v1h-2zM507 502h1v1h-1zM509 502h1v1h-1zM508 503h1v1h-1zM507 504h1v1h-1zM509 504h1v1h-1zM505 505h2v1h-2zM510 505h2v1h-2zM506 506h1v1h-1zM510 506h1v1h-1zM516 500h1v1h-1zM520 500h1v1h-1zM515 501h2v1h-2zM520 501h2v1h-2zM517 502h1v1h-1zM519 502h1v1h-1zM518 503h1v1h-1zM517 504h1v1h-1zM519 504h1v1h-1zM515 505h2v1h-2zM520 505h2v1h-2zM516 506h1v1h-1zM520 506h1v1h-1zM527 499h1v1h-1zM531 499h1v1h-1zM526 500h2v1h-2zM531 500h2v1h-2zM528 501h1v1h-1zM530 501h1v1h-1zM529 502h1v1h-1zM528 503h1v1h-1zM530 503h1v1h-1zM526 504h2v1h-2zM531 504h2v1h-2zM527 505h1v1h-1zM531 505h1v1h-1zM538 499h1v1h-1zM542 499h1v1h-1zM537 500h2v1h-2zM542 500h2v1h-2zM539 501h1v1h-1zM541 501h1v1h-1zM540 502h1v1h-1zM539 503h1v1h-1zM541 503h1v1h-1zM537 504h2v1h-2zM542 504h2v1h-2zM538 505h1v1h-1zM542 505h1v1h-1zM549 499h1v1h-1zM553 499h1v1h-1zM548 500h2v1h-2zM553 500h2v1h-2zM550 501h1v1h-1zM552 501h1v1h-1zM551 502h1v1h-1zM550 503h1v1h-1zM552 503h1v1h-1zM548 504h2v1h-2zM553 504h2v1h-2zM549 505h1v1h-1zM553 505h1v1h-1zM560 499h1v1h-1zM564 499h1v1h-1zM559 500h2v1h-2zM564 500h2v1h-2zM561 501h1v1h-1zM563 501h1v1h-1zM562 502h1v1h-1zM561 503h1v1h-1zM563 503h1v1h-1zM559 504h2v1h-2zM564 504h2v1h-2zM560 505h1v1h-1zM564 505h1v1h-1zM571 498h1v1h-1zM575 498h1v1h-1zM570 499h2v1h-2zM575 499h2v1h-2zM572 500h1v1h-1zM574 500h1v1h-1zM573 501h1v1h-1zM572 502h1v1h-1zM574 502h1v1h-1zM570 503h2v1h-2zM575 503h2v1h-2zM571 504h1v1h-1zM575 504h1v1h-1zM582 498h1v1h-1zM586 498h1v1h-1zM581 499h2v1h-2zM586 499h2v1h-2zM583 500h1v1h-1zM585 500h1v1h-1zM584 501h1v1h-1zM583 502h1v1h-1zM585 502h1v1h-1zM581 503h2v1h-2zM586 503h2v1h-2zM582 504h1v1h-1zM586 504h1v1h-1zM592 498h1v1h-1zM596 498h1v1h-1zM591 499h2v1h-2zM596 499h2v1h-2zM593 500h1v1h-1zM595 500h1v1h-1zM594 501h1v1h-1zM593 502h1v1h-1zM595 502h1v1h-1zM591 503h2v1h-2zM596 503h2v1h-2zM592 504h1v1h-1zM596 504h1v1h-1zM603 498h1v1h-1zM607 498h1v1h-1zM602 499h2v1h-2zM607 499h2v1h-2zM604 500h1v1h-1zM606 500h1v1h-1zM605 501h1v1h-1zM604 502h1v1h-1zM606 502h1v1h-1zM602 503h2v1h-2zM607 503h2v1h-2zM603 504h1v1h-1zM607 504h1v1h-1zM614 497h1v1h-1zM618 497h1v1h-1zM613 498h2v1h-2zM618 498h2v1h-2zM615 499h1v1h-1zM617 499h1v1h-1zM616 500h1v1h-1zM615 501h1v1h-1zM617 501h1v1h-1zM613 502h2v1h-2zM618 502h2v1h-2zM614 503h1v1h-1zM618 503h1v1h-1zM625 497h1v1h-1zM629 497h1v1h-1zM624 498h2v1h-2zM629 498h2v1h-2zM626 499h1v1h-1zM628 499h1v1h-1zM627 500h1v1h-1zM626 501h1v1h-1zM628 501h1v1h-1zM624 502h2v1h-2zM629 502h2v1h-2zM625 503h1v1h-1zM629 503h1v1h-1zM636 497h1v1h-1zM640 497h1v1h-1zM635 498h2v1h-2zM640 498h2v1h-2zM637 499h1v1h-1zM639 499h1v1h-1zM638 500h1v1h-1zM637 501h1v1h-1zM639 501h1v1h-1zM635 502h2v1h-2zM640 502h2v1h-2zM636 503h1v1h-1zM640 503h1v1h-1z" fill="#0000FF"/>
<rect x="373" y="621" width="9" height="3" fill="#FF0000"/>
<rect x="376" y="618" width="3" height="9" fill="#FF0000"/>
<rect x="374" y="622" width="7" height="1" fill="#0000FF"/>
<rect x="377" y="619" width="1" height="7" fill="#0000FF"/>
<rect x="384" y="615" width="9" height="3" fill="#FF0000"/>
<rect x="387" y="612" width="3" height="9" fill="#FF0000"/>
<rect x="385" y="616" width="7" height="1" fill="#0000FF"/>
<rect x="388" y="613" width="1" height="7" fill="#0000FF"/>
<rect x="395" y="610" width="9" height="3" fill="#FF0000"/>
<rect x="398" y="607" width="3" height="9" fill="#FF0000"/>
<rect x="396" y="611" width="7" height="1" fill="#0000FF"/>
<rect x="399" y="608" width="1" height="7" fill="#0000FF"/>
<rect x="406" y="606" width="9" height="3" fill="#FF0000"/>
<rect x="409" y="603" width="3" height="9" fill="#FF0000"/>
<rect x="407" y="607" width="7" height="1" fill="#0000FF"/>
<rect x="410" y="604" width="1" height="7" fill="#0000FF"/>
<rect x="417" y="604" width="9" height="3" fill="#FF0000"/>
<rect x="420" y="601" width="3" height="9" fill="#FF0000"/>
<rect x="418" y="605" width="7" height="1" fill="#0000FF"/>
<rect x="421" y="602" width="1" height="7" fill="#0000FF"/>
<rect x="427" y="603" width="9" height="3" fill="#FF0000"/>
<rect x="430" y="600" width="3" height="9" fill="#FF0000"/>
<rect x="428" y="604" width="7" height="1" fill="#0000FF"/>
<rect x="431" y="601" width="1" height="7" fill="#0000FF"/>
<rect x="438" y="602" width="9" height="3" fill="#FF0000"/>
<rect x="441" y="599" width="3" height="9" fill="#FF0000"/>
<rect x="439" y="603" width="7" height="1" fill="#0000FF"/>
<rect x="442" y="600" width="1" height="7" fill="#0000FF"/>
<rect x="449" y="602" width="9" height="3" fill="#FF0000"/>
<rect x="452" y="599" width="3" height="9" fill="#FF0000"/>
<rect x="450" y="603" width="7" height="1" fill="#0000FF"/>
<rect x="453" y="600" width="1" height="7" fill="#0000FF"/>
<rect x="460" y="602" width="9" height="3" fill="#FF0000"/>
<rect x="463" y="599" width="3" height="9" fill="#FF0000"/>
<rect x="461" y="603" width="7" height="1" fill="#0000FF"/>
<rect x="464" y="600" width="1" height="7" fill="#0000FF"/>
<rect x="471" y="602" width="9" height="3" fill="#FF0000"/>
<rect x="474" y="599" width="3" height="9" fill="#FF0000"/>
<rect x="472" y="603" width="7" height="1" fill="#0000FF"/>
<rect x="475" y="600" width="1" height="7" fill="#0000FF"/>
<rect x="482" y="602" width="9" height="3" fill="#FF0000"/>
<rect x="485" y="599" width="3" height="9" fill="#FF0000"/>
<rect x="483" y="603" width="7" height="1" fill="#0000FF"/>
<rect x="486" y="600" width="1" height="7" fill="#0000FF"/>
<rect x="493" y="602" width="9" height="3" fill="#FF0000"/>
<rect x="496" y="599" width="3" height="9" fill="#FF0000"/>
<rect x="494" y="603" width="7" height="1" fill="#0000FF"/>
<rect x="497" y="600" width="1" height="7" fill="#0000FF"/>
<rect x="504" y="602" width="9" height="3" fill="#FF0000"/>
<rect x="507" y="599" width="3" height="9" fill="#FF0000"/>
<rect x="505" y="603" width="7" height="1" fill="#0000FF"/>
<rect x="508" y="600" width="1" height="7" fill="#0000FF"/>
<rect x="514" y="602" width="9" height="3" fill="#FF0000"/>
<rect x="517" y="599" width="3" height="9" fill="#FF0000"/>
<rect x="515" y="603" width="7" height="1" fill="#0000FF"/>
<rect x="518" y="600" width="1" height="7" fill="#0000FF"/>
<rect x="525" y="602" width="9" height="3" fill="#FF0000"/>
<rect x="528" y="599" width="3" height="9" fill="#FF0000"/>
<rect x="526" y="603" width="7" height="1" fill="#0000FF"/>
<rect x="529" y="600" width="1" height="7" fill="#0000FF"/>
<rect x="536" y="602" width="9" height="3" fill="#FF0000"/>
<rect x="539" y="599" width="3" height="9" fill="#FF0000"/>
<rect x="537" y="603" width="7" height="1" fill="#0000FF"/>
<rect x="540" y="600" width="1" height="7" fill="#0000FF"/>
<rect x="547" y="602" width="9" height="3" fill="#FF0000"/>
<rect x="550" y="599" width="3" height="9" fill="#FF0000"/>
<rect x="548" y="603" width="7" height="1" fill="#0000FF"/>
<rect x="551" y="600" width="1" height="7" fill="#0000FF"/>
<rect x="558" y="602" width="9" height="3" fill="#FF0000"/>
<rect x="561" y="599" width="3" height="9" fill="#FF0000"/>
<rect x="559" y="603" width="7" height="1" fill="#0000FF"/>
<rect x="562" y="600" width="1" height="7" fill="#0000FF"/>
<rect x="569" y="602" width="9" height="3" fill="#FF0000"/>
<rect x="572" y="599" width="3" height="9" fill="#FF0000"/>
<rect x="570" y="603" width="7" height="1" fill="#0000FF"/>
<rect x="573" y="600" width="1" height="7" fill="#0000FF"/>
<rect x="580" y="602" width="9" height="3" fill="#FF0000"/>
<rect x="583" y="599" width="3" height="9" fill="#FF0000"/>
<rect x="581" y="603" width="7" height="1" fill="#0000FF"/>
<rect x="584" y="600" width="1" height="7" fill="#0000FF"/>
<rect x="590" y="602" width="9" height="3" fill="#FF0000"/>
<rect x="593" y="599" width="3" height="9" fill="#FF0000"/>
<rect x="591" y="603" width="7" height="1" fill="#0000FF"/>
<rect x="594" y="600" width="1" height="7" fill="#0000FF"/>
<rect x="601" y="602" width="9" height="3" fill="#FF0000"/>
<rect x="604" y="599" width="3" height="9" fill="#FF0000"/>
<rect x="602" y="603" width="7" height="1" fill="#0000FF"/>
<rect x="605" y="600" width="1" height="7" fill="#0000FF"/>
<rect x="612" y="602" width="9" height="3" fill="#FF0000"/>
<rect x="615" y="599" width="3" height="9" fill="#FF0000"/>
<rect x="613" y="603" width="7" height="1" fill="#0000FF"/>
<rect x="616" y="600" width="1" height="7" fill="#0000FF"/>
<rect x="623" y="602" width="9" height="3" fill="#FF0000"/>
<rect x="626" y="599" width="3" height="9" fill="#FF0000"/>
<rect x="624" y="603" width="7" height="1" fill="#0000FF"/>
<rect x="627" y="600" width="1" height="7" fill="#0000FF"/>
<rect x="634" y="602" width="9" height="3" fill="#FF0000"/>
<rect x="637" y="599" width="3" height="9" fill="#FF0000"/>
<rect x="635" y="603" width="7" height="1" fill="#0000FF"/>
<rect x="638" y="600" width="1" height="7" fill="#0000FF"/>
<rect x="649" y="315" width="51" height="64" fill="#FFE4C4"/>
<path d="M649 315H700L698 317H651V377L649 379Z" fill="#998976"/>
<path d="M700 379H649L651 377H698V317L700 315Z" fill="#FFFFFF"/>
<path d="M657 322h1v1h-1zM663 322h1v1h-1zM656 323h3v1h-3zM662 323h3v1h-3zM657 324h3v1h-3zM661 324h3v1h-3zM658 325h5v1h-5zM659 326h3v1h-3zM658 327h5v1h-5zM657 328h3v1h-3zM661 328h3v1h-3zM656 329h3v1h-3zM662 329h3v1h-3zM657 330h1v1h-1zM663 330h1v1h-1z" fill="#FF0000"/>
<path d="M657 323h1v1h-1zM663 323h1v1h-1zM658 324h1v1h-1zM662 324h1v1h-1zM659 325h1v1h-1zM661 325h1v1h-1zM660 326h1v1h-1zM659 327h1v1h-1zM661 327h1v1h-1zM658 328h1v1h-1zM662 328h1v1h-1zM657 329h1v1h-1zM663 329h1v1h-1z" fill="#0000FF"/>
<text class="hb" x="668.6" y="330" font-size="12" fill="#000" stroke="#000" text-anchor="start" textLength="25" lengthAdjust="spacingAndGlyphs">line1</text>
<rect x="655" y="341" width="9" height="9" fill="#FF0000"/>
<rect x="656" y="342" width="7" height="7" fill="#0000FF"/>
<text class="hb" x="668.6" y="350" font-size="12" fill="#000" stroke="#000" text-anchor="start" textLength="25" lengthAdjust="spacingAndGlyphs">line2</text>
<rect x="655" y="365" width="11" height="3" fill="#FF0000"/>
<rect x="659" y="361" width="3" height="11" fill="#FF0000"/>
<rect x="656" y="366" width="9" height="1" fill="#0000FF"/>
<rect x="660" y="362" width="1" height="9" fill="#0000FF"/>
<text class="hb" x="668.6" y="370" font-size="12" fill="#000" stroke="#000" text-anchor="start" textLength="25" lengthAdjust="spacingAndGlyphs">line3</text>
<rect x="0" y="0" width="730" height="1" fill="#fff"/>
</svg></body></html>
